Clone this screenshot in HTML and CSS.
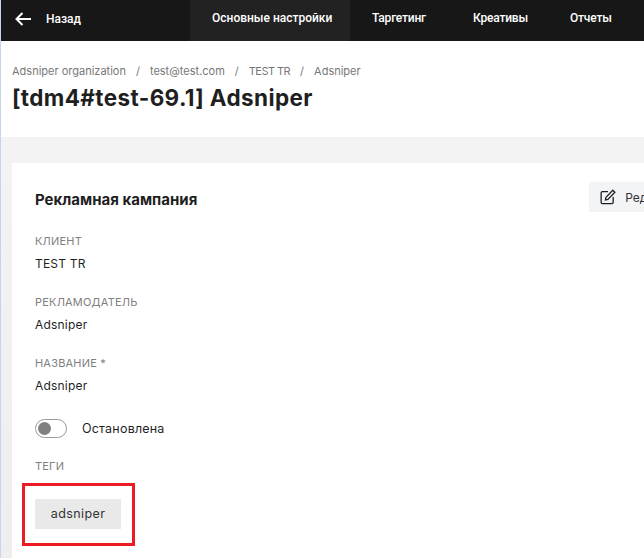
FILE: index.html
```html
<!DOCTYPE html>
<html lang="en">

<head>
	<meta charset="UTF-8">
	<title>Adsniper</title>
	<link rel="stylesheet" href="styles.css">
</head>

<body>
	<div class="page">
		<nav class="topbar">
			<a class="back">
				<svg class="back-icon" width="16" height="14" viewBox="0 0 16 14" fill="none" stroke="#fff" stroke-width="2">
					<path d="M16 7H1.5M7.5 1L1.5 7l6 6" />
				</svg>
				<span>Назад</span>
			</a>
			<a class="tab tab-active">Основные настройки</a>
			<a class="tab tab-targeting">Таргетинг</a>
			<a class="tab tab-creatives">Креативы</a>
			<a class="tab">Отчеты</a>
		</nav>

		<header class="head">
			<div class="crumbs">
				<span>Adsniper organization</span>
				<span>/</span>
				<span>test@test.com</span>
				<span>/</span>
				<span class="crumb-caps">TEST TR</span>
				<span>/</span>
				<span>Adsniper</span>
			</div>
			<h1>[tdm4#test-69.1] Adsniper</h1>
		</header>

		<main class="content">
			<section class="card">
				<div class="card-head">
					<h2>Рекламная кампания</h2>
					<a class="edit">
						<svg width="16" height="16" viewBox="0 0 17 17" fill="none" stroke="#222" stroke-width="1.4">
							<path d="M8.5 2.8H2.6a1.4 1.4 0 0 0-1.4 1.4v10a1.4 1.4 0 0 0 1.4 1.4h10a1.4 1.4 0 0 0 1.4-1.4V8.4" />
							<path d="M6.3 8.9L13.6 1.3l2.2 2.1-7.4 7.6-2.6.6z" />
						</svg>
						<span>Редактировать</span>
					</a>
				</div>

				<div class="field">
					<div class="label">КЛИЕНТ</div>
					<div class="value">TEST TR</div>
				</div>
				<div class="field">
					<div class="label">РЕКЛАМОДАТЕЛЬ</div>
					<div class="value">Adsniper</div>
				</div>
				<div class="field">
					<div class="label">НАЗВАНИЕ *</div>
					<div class="value">Adsniper</div>
				</div>

				<div class="status">
					<span class="toggle"><span class="knob"></span></span>
					<span>Остановлена</span>
				</div>

				<div class="label tags-label">ТЕГИ</div>
				<div class="tags-frame">
					<span class="tag">adsniper</span>
				</div>
			</section>
		</main>
	</div>
</body>

</html>
```

FILE: styles.css
```css
html {
	height: 100%;
}

body {
	margin: 0;
	height: 558px;
	overflow: hidden;
	background: #fff;
	border-left: 1px solid #c6d5ea;
	font-family: 'Inter', 'Roboto', sans-serif;
	color: #1f1f1f;
}

.page {
	width: 643px;
	height: 558px;
	overflow: hidden;
}

.topbar {
	display: flex;
	height: 41px;
	background: #171717;
	color: #fff;
	font-family: 'Roboto', sans-serif;
	font-size: 12px;
	font-weight: 500;
	line-height: 37px;
}

.back {
	display: flex;
	align-items: center;
	width: 189px;
	padding-bottom: 3px;
	box-sizing: border-box;
}

.back-icon {
	margin: 0 15px 0 14px;
}

.tab {
	padding-left: 22px;
	height: 41px;
	letter-spacing: -0.2px;
}

.tab-active {
	width: 138px;
	background: #222;
	letter-spacing: 0;
}

.tab-targeting {
	width: 79px;
}

.tab-creatives {
	width: 75px;
}

.head {
	height: 96px;
	padding: 22px 0 0 11px;
	box-sizing: border-box;
}

.crumbs {
	display: flex;
	gap: 10px;
	font-size: 11px;
	line-height: 16px;
	color: #777;
	white-space: nowrap;
}

.crumb-caps {
	letter-spacing: -0.55px;
}

h1 {
	margin: 5px 0 0;
	font-size: 22.5px;
	line-height: 28px;
	font-weight: 700;
	letter-spacing: 0.38px;
	white-space: nowrap;
}

.content {
	height: 421px;
	padding: 26px 0 0 11px;
	box-sizing: border-box;
	background: linear-gradient(#f3f3f3, #eee);
}

.card {
	width: 760px;
	height: 400px;
	padding: 20px 23px 0;
	box-sizing: border-box;
	background: #fff;
}

.card-head {
	display: flex;
	justify-content: space-between;
	height: 51px;
}

h2 {
	margin: 7px 0 0;
	font-size: 15px;
	line-height: 20px;
	font-weight: 700;
}

.edit {
	display: flex;
	align-items: center;
	gap: 9px;
	height: 30px;
	padding: 0 10px 0 11px;
	margin: -1px 25px 0 0;
	background: #f3f4f6;
	font-size: 12px;
	color: #333;
	white-space: nowrap;
}

.label {
	font-size: 11px;
	line-height: 14px;
	color: #808080;
	letter-spacing: 0.2px;
}

.field {
	height: 61px;
}

.value {
	margin-top: 8px;
	font-size: 12px;
	line-height: 16px;
	letter-spacing: 0.2px;
}

.status {
	display: flex;
	align-items: center;
	gap: 15px;
	height: 20px;
	margin-top: 1px;
	font-size: 12.5px;
	letter-spacing: 0.2px;
}

.toggle {
	display: flex;
	align-items: center;
	width: 32px;
	height: 19px;
	box-sizing: border-box;
	padding-left: 2px;
	border: 1px solid #999;
	border-radius: 10px;
}

.knob {
	width: 13px;
	height: 13px;
	border-radius: 50%;
	background: #808080;
}

.tags-label {
	margin-top: 21px;
}

.tags-frame {
	width: 113px;
	height: 63px;
	margin: 10px 0 0 -13px;
	padding: 13px 0 0 10px;
	border: 3px solid #ed1c24;
	box-sizing: border-box;
}

.tag {
	display: block;
	width: 86px;
	height: 30px;
	background: #e9e9e9;
	font-size: 12.5px;
	line-height: 30px;
	text-align: center;
	letter-spacing: 0.4px;
	color: #333;
}
```
